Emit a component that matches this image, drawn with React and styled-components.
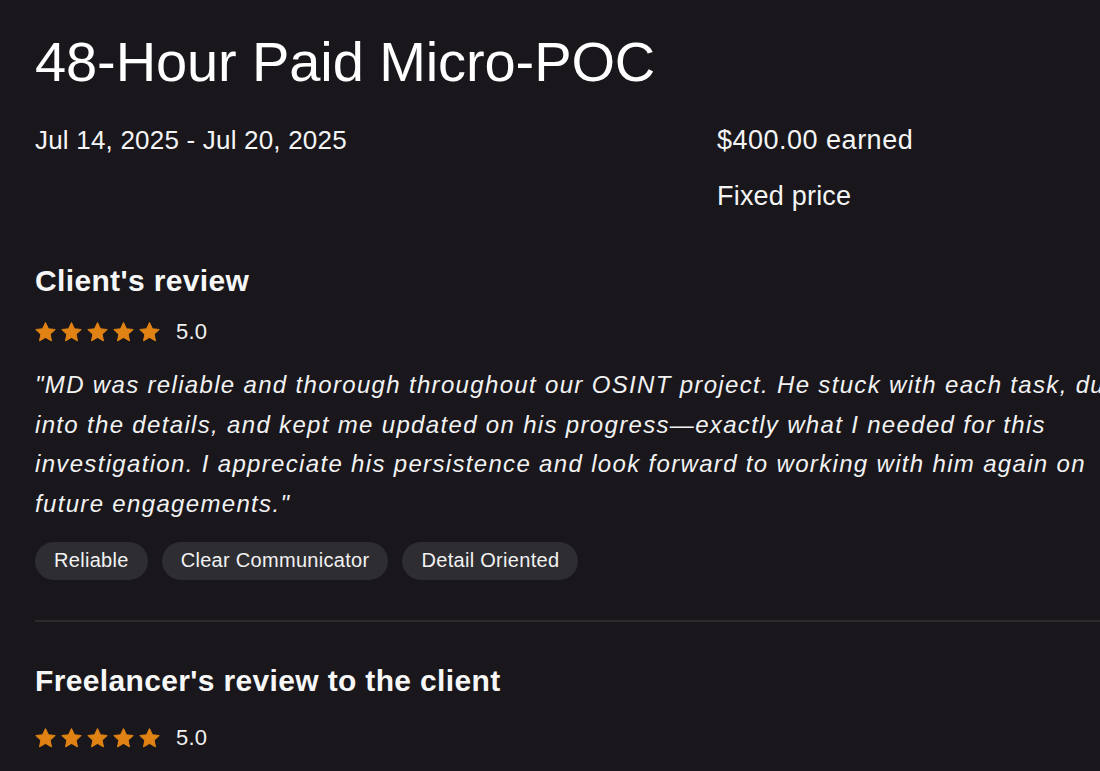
import React from "react";
import styled, { createGlobalStyle } from "styled-components";

const Global = createGlobalStyle`
  html, body { margin: 0; padding: 0; background: #19171b; overflow: hidden; }
  body { font-family: "Liberation Sans", Arial, sans-serif; color: #f4f4f5; }
`;

const Page = styled.div`
  width: 1100px;
  height: 771px;
  overflow: hidden;
  background: #19171b;
`;

const Content = styled.div`
  width: 1105px;
  padding: 24px 0 0 35px;
  box-sizing: content-box;
`;

const Title = styled.h1`
  margin: 0;
  font-size: 56px;
  font-weight: 400;
  line-height: 76px;
  letter-spacing: -0.1px;
  color: #ffffff;
`;

const Meta = styled.div`
  display: grid;
  grid-template-columns: 682px 1fr;
  margin-top: 22px;
`;

const MetaCol = styled.div`
  display: flex;
  flex-direction: column;
  gap: 20px;
`;

const MetaText = styled.div`
  font-size: ${(p) => p.$size || 26}px;
  line-height: 36px;
  letter-spacing: ${(p) => p.$spacing || 0.2}px;
  color: #f4f4f5;
`;

const Section = styled.section`
  padding-top: ${(p) => p.$top}px;
`;

const Heading = styled.h2`
  margin: 0;
  font-size: 30px;
  font-weight: 700;
  line-height: 40px;
  letter-spacing: 0.35px;
  color: #f7f7f8;
`;

const RatingRow = styled.div`
  display: flex;
  align-items: center;
  gap: 16px;
  margin-top: ${(p) => p.$gap}px;
  height: 30px;
`;

const Stars = styled.div`
  display: flex;
  gap: 5px;
`;

const Score = styled.span`
  font-size: 22px;
  letter-spacing: 0.2px;
  color: #f0f0f1;
`;

const Quote = styled.p`
  margin: 18px 0 0;
  font-style: italic;
  font-size: 24px;
  line-height: 39.7px;
  letter-spacing: 1.33px;
  color: #f2f2f3;
`;

const Tags = styled.div`
  display: flex;
  gap: 14px;
  margin-top: 18px;
`;

const Tag = styled.span`
  display: inline-flex;
  align-items: center;
  height: 38px;
  padding: 0 19px;
  border-radius: 19px;
  background: #2e2d31;
  font-size: 20px;
  letter-spacing: 0.3px;
  color: #f2f2f3;
`;

const Divider = styled.hr`
  border: none;
  height: 2px;
  background: #2c2b2e;
  margin: 40px 0 0;
`;

const Star = () => (
  <svg width="21" height="20" viewBox="0 0 24 23">
    <path
      d="M12 0.8l3.3 7 7.6.9-5.6 5.2 1.5 7.6L12 17.7l-6.8 3.8 1.5-7.6L1.1 8.7l7.6-.9z"
      fill="#e08214"
      stroke="#e08214"
      strokeWidth="1.2"
      strokeLinejoin="round"
    />
  </svg>
);

const Rating = ({ value, gap }) => (
  <RatingRow $gap={gap}>
    <Stars>
      {[0, 1, 2, 3, 4].map((i) => (
        <Star key={i} />
      ))}
    </Stars>
    <Score>{value}</Score>
  </RatingRow>
);

export default function App() {
  return (
    <Page>
      <Global />
      <Content>
        <Title>48-Hour Paid Micro-POC</Title>
        <Meta>
          <MetaCol>
            <MetaText>Jul 14, 2025 - Jul 20, 2025</MetaText>
          </MetaCol>
          <MetaCol>
            <MetaText $size={27} $spacing={0.5}>$400.00 earned</MetaText>
            <MetaText $size={27} $spacing={0.2}>Fixed price</MetaText>
          </MetaCol>
        </Meta>
        <Section $top={47}>
          <Heading>Client's review</Heading>
          <Rating value="5.0" gap={16} />
          <Quote>
            "MD was reliable and thorough throughout our OSINT project. He stuck with each task, dug into the details, and kept me updated on his progress—exactly what I needed for this investigation. I appreciate his persistence and look forward to working with him again on future engagements."
          </Quote>
          <Tags>
            <Tag>Reliable</Tag>
            <Tag>Clear Communicator</Tag>
            <Tag>Detail Oriented</Tag>
          </Tags>
          <Divider />
        </Section>
        <Section $top={39}>
          <Heading>Freelancer's review to the client</Heading>
          <Rating value="5.0" gap={22} />
        </Section>
      </Content>
    </Page>
  );
}
